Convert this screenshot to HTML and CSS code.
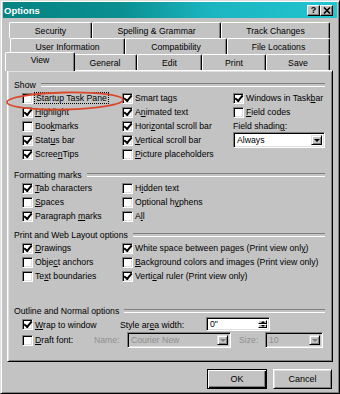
FILE: index.html
```html
<!DOCTYPE html>
<html lang="en">
<head>
    <meta charset="UTF-8">
    <title>Options</title>
    <link rel="stylesheet" href="styles.css">
</head>
<body>
<div class="dialog">
    <div class="titlebar">
        <span class="title">Options</span>
        <span class="tb-btns">
            <span class="tb-btn">?</span>
            <span class="tb-btn"><svg width="8" height="7" viewBox="0 0 8 7"><path d="M1 0.5L7 6.5M7 0.5L1 6.5" stroke="#000" stroke-width="1.6"/></svg></span>
        </span>
    </div>

    <div class="tabs">
        <div class="tab-row row1">
            <div class="tab">Security</div>
            <div class="tab">Spelling &amp; Grammar</div>
            <div class="tab">Track Changes</div>
        </div>
        <div class="tab-row row2">
            <div class="tab">User Information</div>
            <div class="tab">Compatibility</div>
            <div class="tab">File Locations</div>
        </div>
        <div class="tab-row row3">
            <div class="tab active">View</div>
            <div class="tab">General</div>
            <div class="tab">Edit</div>
            <div class="tab">Print</div>
            <div class="tab">Save</div>
        </div>
    </div>

    <div class="panel">
        <!-- Show -->
        <div class="group">
            <div class="group-head"><span>Show</span></div>
            <div class="grid three">
                <label class="cb"><span class="box"></span><span class="focus">Startup Task Pane</span></label>
                <label class="cb"><span class="box on"></span><span>Smart tags</span></label>
                <label class="cb"><span class="box on"></span><span>Windows in Task<u>b</u>ar</span></label>

                <label class="cb"><span class="box on"></span><span><u>H</u>ighlight</span></label>
                <label class="cb"><span class="box on"></span><span>A<u>n</u>imated text</span></label>
                <label class="cb"><span class="box"></span><span><u>F</u>ield codes</span></label>

                <label class="cb"><span class="box"></span><span>Boo<u>k</u>marks</span></label>
                <label class="cb"><span class="box on"></span><span>Hori<u>z</u>ontal scroll bar</span></label>
                <div class="plain">Field shadin<u>g</u>:</div>

                <label class="cb"><span class="box on"></span><span>Stat<u>u</u>s bar</span></label>
                <label class="cb"><span class="box on"></span><span><u>V</u>ertical scroll bar</span></label>
                <div class="combo shading"><span class="val">Always</span><span class="arrow"></span></div>

                <label class="cb"><span class="box on"></span><span>Scree<u>n</u>Tips</span></label>
                <label class="cb"><span class="box"></span><span><u>P</u>icture placeholders</span></label>
            </div>
        </div>

        <!-- Formatting marks -->
        <div class="group fmt">
            <div class="group-head"><span>Formatting marks</span></div>
            <div class="grid two">
                <label class="cb"><span class="box on"></span><span><u>T</u>ab characters</span></label>
                <label class="cb"><span class="box"></span><span>H<u>i</u>dden text</span></label>
                <label class="cb"><span class="box"></span><span><u>S</u>paces</span></label>
                <label class="cb"><span class="box"></span><span>Optional h<u>y</u>phens</span></label>
                <label class="cb"><span class="box on"></span><span>Paragraph <u>m</u>arks</span></label>
                <label class="cb"><span class="box"></span><span>A<u>l</u>l</span></label>
            </div>
        </div>

        <!-- Print and Web Layout -->
        <div class="group print">
            <div class="group-head"><span>Print and Web Layout options</span></div>
            <div class="grid two">
                <label class="cb"><span class="box on"></span><span><u>D</u>rawings</span></label>
                <label class="cb"><span class="box on"></span><span>White space between pages (Print view onl<u>y</u>)</span></label>
                <label class="cb"><span class="box"></span><span>Obje<u>c</u>t anchors</span></label>
                <label class="cb"><span class="box"></span><span><u>B</u>ackground colors and images (Print view only)</span></label>
                <label class="cb"><span class="box"></span><span>Te<u>x</u>t boundaries</span></label>
                <label class="cb"><span class="box on"></span><span>Verti<u>c</u>al ruler (Print view only)</span></label>
            </div>
        </div>

        <!-- Outline and Normal -->
        <div class="group outline">
            <div class="group-head"><span>Outline and Normal options</span></div>
            <div class="orow first">
                <label class="cb w-wrap"><span class="box on"></span><span><u>W</u>rap to window</span></label>
                <span class="plain w-style">Style ar<u>e</u>a width:</span>
                <div class="spin"><span class="val">0"</span><span class="spin-btns"><span class="up"></span><span class="down"></span></span></div>
            </div>
            <div class="orow second">
                <label class="cb w-draft"><span class="box"></span><span><u>D</u>raft font:</span></label>
                <span class="plain off w-name">Name:</span>
                <div class="combo off name"><span class="val">Courier New</span><span class="arrow"></span></div>
                <span class="plain off w-size">Size:</span>
                <div class="combo off size"><span class="val">10</span><span class="arrow"></span></div>
            </div>
        </div>
    </div>

    <div class="footer">
        <button class="btn default">OK</button>
        <button class="btn">Cancel</button>
    </div>

    <svg class="mark" width="124" height="22" viewBox="0 0 124 22">
        <ellipse cx="61" cy="11" rx="58" ry="8.5" fill="none" stroke="#d9482a" stroke-width="1.8" transform="rotate(-1.2 61 11)"/>
    </svg>
</div>
</body>
</html>
```

FILE: styles.css
```css
* {
    box-sizing: border-box;
}
body {
    margin: 0;
    font-family: "Liberation Sans", Arial, sans-serif;
    font-size: 8.7px;
    color: #000;
    background: #c3c3c3;
}
u {
    text-decoration: underline;
    text-underline-offset: 1px;
}
.dialog {
    position: relative;
    width: 340px;
    height: 394px;
    background: #c3c3c3;
    border: 1px solid;
    border-color: #dfdfdf #000 #000 #dfdfdf;
    box-shadow: inset 1px 1px #fff, inset -1px -1px #808080;
    padding: 1px 2px 2px;
}

/* title bar */
.titlebar {
    height: 16px;
    display: flex;
    align-items: center;
    justify-content: space-between;
    padding: 0 4px 0 1px;
    background: linear-gradient(90deg, #078383 0%, #0a8f91 35%, #1bb5c0 62%, #22c4d0 100%);
}
.title {
    color: #fff;
    font-weight: bold;
    font-size: 9.5px;
}
.tb-btns {
    display: flex;
}
.tb-btn {
    width: 13px;
    height: 11px;
    display: flex;
    align-items: center;
    justify-content: center;
    background: #c3c3c3;
    border: 1px solid;
    border-color: #fff #000 #000 #fff;
    box-shadow: inset -1px -1px #808080;
    font-weight: bold;
    font-size: 9px;
    line-height: 1;
}

/* tabs */
.tabs {
    margin-top: 4px;
}
.tab-row {
    display: grid;
    height: 16px;
}
.row1 {
    margin-left: 6px;
    grid-template-columns: 83px 129px 109px;
}
.row2 {
    margin-left: 7px;
    grid-template-columns: 115px 102px 103px;
}
.row3 {
    margin-left: 4px;
    grid-template-columns: 66px 64px 65px 64px 64px;
}
.tab {
    height: 16px;
    text-align: center;
    line-height: 15px;
    padding-top: 1px;
    background: #c3c3c3;
    border-top: 1px solid #fff;
    border-left: 1px solid #fff;
    border-right: 1px solid #000;
    border-radius: 2px 2px 0 0;
    box-shadow: inset -1px 0 #808080;
    white-space: nowrap;
}
.tab.active {
    position: relative;
    z-index: 1;
    height: 19px;
    margin: -2px -2px -1px -2px;
    padding-top: 0;
}

/* main panel */
.panel {
    margin-left: 4px;
    width: 326px;
    height: 292px;
    border: 1px solid;
    border-color: #fff #000 #000 #fff;
    box-shadow: inset 1px 1px #dfdfdf, inset -1px -1px #808080;
    padding: 8px 7px 0 6px;
}
.group-head {
    display: flex;
    align-items: center;
    height: 12px;
}
.group-head::after {
    content: "";
    flex: 1;
    height: 2px;
    margin-left: 5px;
    border-top: 1px solid #808080;
    border-bottom: 1px solid #fff;
}
.fmt {
    margin-top: 8px;
}
.print {
    margin-top: 6px;
}
.outline {
    margin-top: 22px;
}
.grid {
    display: grid;
    margin-left: 8px;
    grid-auto-rows: 14px;
}
.grid.three {
    grid-template-columns: 100px 111px 1fr;
}
.grid.two {
    grid-template-columns: 100px 1fr;
}
.cb {
    display: flex;
    align-items: center;
    gap: 2px;
    white-space: nowrap;
}
.plain {
    display: flex;
    align-items: center;
    white-space: nowrap;
}
.off {
    color: #8f8f8f;
}
.box {
    width: 11px;
    height: 11px;
    flex: none;
    background: #fff;
    border: 1px solid;
    border-color: #808080 #fff #fff #808080;
    box-shadow: inset 1px 1px #000, inset -1px -1px #dfdfdf;
    display: flex;
    align-items: center;
    justify-content: center;
}
.box.on::after {
    content: "";
    width: 6px;
    height: 3px;
    margin-top: -2px;
    border-left: 2px solid #000;
    border-bottom: 2px solid #000;
    transform: rotate(-50deg);
}
.focus {
    outline: 1px dotted #000;
    outline-offset: 0;
    padding: 0 1px;
}

/* combo and spin boxes */
.combo, .spin {
    display: flex;
    align-items: stretch;
    background: #fff;
    border: 1px solid;
    border-color: #808080 #fff #fff #808080;
    box-shadow: inset 1px 1px #000, inset -1px -1px #dfdfdf;
    padding: 2px;
}
.combo .val, .spin .val {
    flex: 1;
    display: flex;
    align-items: center;
    padding-left: 1px;
    white-space: nowrap;
    overflow: hidden;
}
.combo.off {
    background: #c3c3c3;
}
.arrow {
    width: 11px;
    flex: none;
    background: #c3c3c3;
    border: 1px solid;
    border-color: #dfdfdf #000 #000 #dfdfdf;
    box-shadow: inset 1px 1px #fff, inset -1px -1px #808080;
    display: flex;
    align-items: center;
    justify-content: center;
}
.arrow::after {
    content: "";
    border-left: 3px solid transparent;
    border-right: 3px solid transparent;
    border-top: 3px solid #000;
}
.combo.off .arrow::after {
    border-top-color: #808080;
}
.shading {
    grid-row: span 2;
    align-self: start;
    width: 92px;
    height: 16px;
    margin-top: -1px;
}

.orow {
    display: flex;
    align-items: center;
    margin-left: 8px;
}
.orow.first {
    height: 15px;
}
.orow.second {
    height: 16px;
}
.w-wrap {
    width: 98px;
}
.w-style {
    width: 86px;
}
.spin {
    width: 64px;
    height: 14px;
    margin-top: -1px;
}
.spin-btns {
    width: 9px;
    display: flex;
    flex-direction: column;
}
.spin-btns span {
    flex: 1;
    background: #c3c3c3;
    border: 1px solid;
    border-color: #fff #000 #000 #fff;
    display: flex;
    align-items: center;
    justify-content: center;
}
.spin-btns .up::after {
    content: "";
    border-left: 2px solid transparent;
    border-right: 2px solid transparent;
    border-bottom: 2px solid #000;
}
.spin-btns .down::after {
    content: "";
    border-left: 2px solid transparent;
    border-right: 2px solid transparent;
    border-top: 2px solid #000;
}
.w-draft {
    width: 72px;
}
.w-name {
    width: 33px;
}
.combo.name {
    width: 104px;
    height: 16px;
}
.w-size {
    width: 26px;
    margin-left: 8px;
}
.combo.size {
    width: 58px;
    height: 16px;
}

/* buttons */
.footer {
    display: flex;
    justify-content: flex-end;
    gap: 6px;
    padding-top: 7px;
    margin-right: 5px;
}
.btn {
    width: 59px;
    height: 20px;
    font-family: "Liberation Sans", Arial, sans-serif;
    font-size: 9px;
    background: #c3c3c3;
    border: 1px solid;
    border-color: #fff #000 #000 #fff;
    box-shadow: inset 1px 1px #dfdfdf, inset -1px -1px #808080;
    padding: 0;
}
.btn.default {
    width: 60px;
    border-color: #000;
    box-shadow: inset 1px 1px #fff, inset -1px -1px #000, inset -2px -2px #808080;
}

/* red annotation ring */
.mark {
    position: absolute;
    left: 3px;
    top: 89px;
}
```
